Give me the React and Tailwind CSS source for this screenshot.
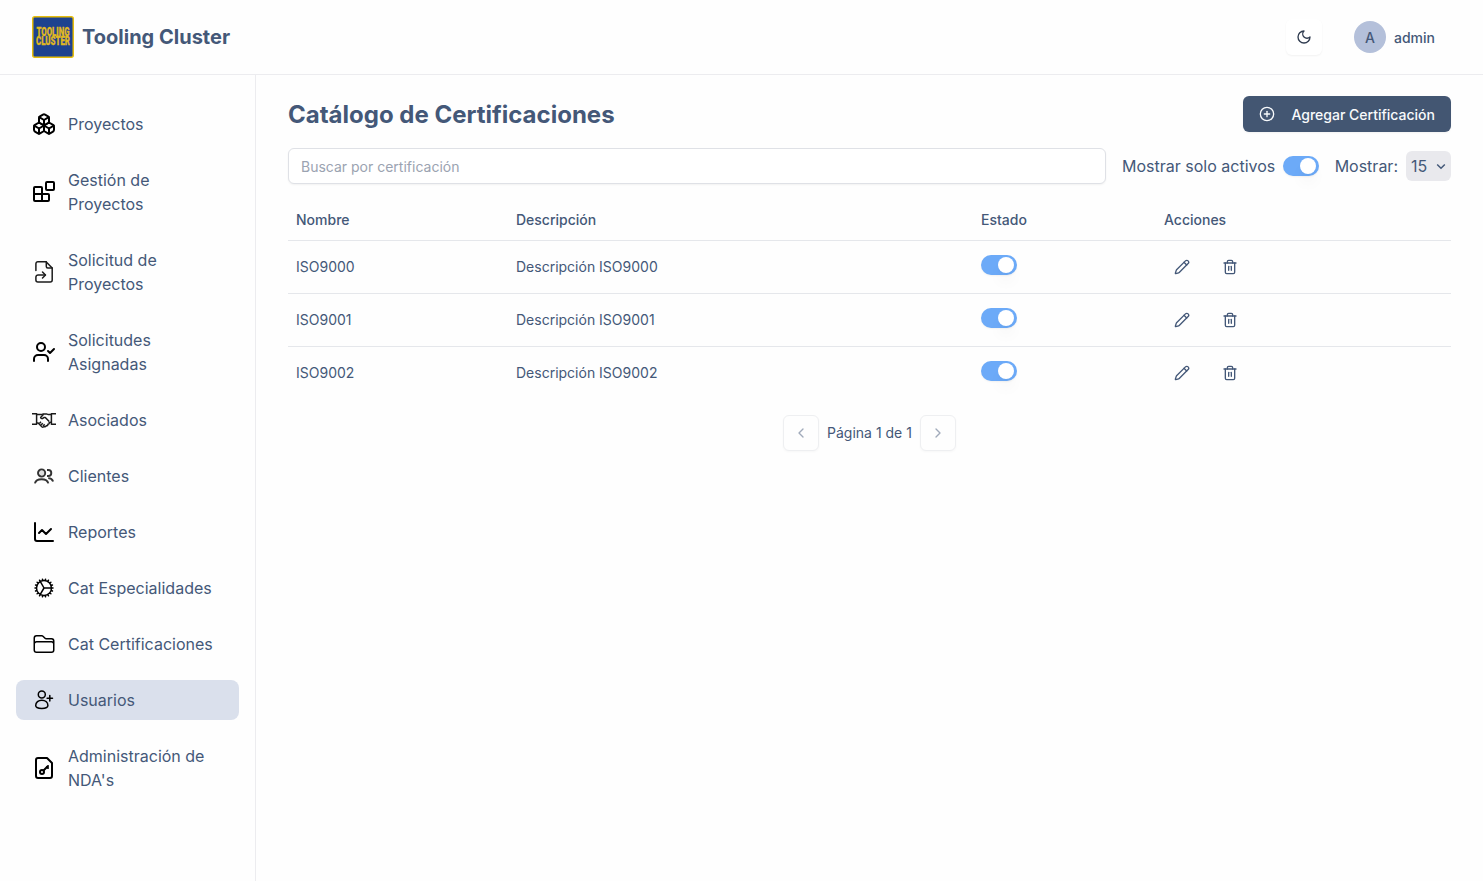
import { LuBoxes, LuUserCheck, LuChartLine, LuFileKey, LuMoon, LuPencil, LuTrash2, LuCirclePlus, LuChevronLeft, LuChevronRight } from 'react-icons/lu'
import { HiOutlineCog, HiOutlineFolder } from 'react-icons/hi2'

function BlocksIcon({ className }) {
  return (
    <svg viewBox="0 0 24 24" className={className} fill="none" stroke="currentColor" strokeWidth="2" strokeLinecap="round" strokeLinejoin="round">
      <rect width="8" height="8" x="14" y="2" rx="1" />
      <path d="M10 21V8a1 1 0 0 0-1-1H3a1 1 0 0 0-1 1v12a1 1 0 0 0 1 1h13a1 1 0 0 0 1-1v-5a1 1 0 0 0-1-1H2" />
    </svg>
  )
}

function FileArrowIcon({ className }) {
  return (
    <svg viewBox="0 0 24 24" className={className} fill="none" stroke="#1c1c1c" strokeWidth="1.5" strokeLinecap="round" strokeLinejoin="round">
      <path d="M3.900 10.500V3.800a2 2 0 0 1 2-2H14l6.200 6.200v12.100a2 2 0 0 1-2 2H5.900a2 2 0 0 1-2-2V17.200A2.200 2.200 0 0 1 6.100 15h7" />
      <path d="M14.300 1.800v4.700c0 .9.600 1.500 1.500 1.500h4.400M10.500 12l3 3-3 3" />
    </svg>
  )
}

function HandshakeIcon({ className }) {
  return (
    <svg viewBox="0 0 24 24" className={className} fill="none" stroke="#1a1a1a" strokeWidth="1.5" strokeLinejoin="round">
      <path d="M0 5.700h4.600v10.500H0M24 5.700h-4.600v10.500H24" />
      <path d="M4.600 6.600h4.600l2.200-.7h3l2 .7h3" />
      <path d="M11.600 6.200 8.600 9.400c.2 1.500 1.900 1.700 3.300.2l1.400-.2 3.900 4.200" />
      <path d="M4.600 15h1.600l3.600 3.700c.8.7 1.800.5 2.200-.2 1 .6 2 0 2.200-.8 1 .2 1.800-.5 1.700-1.400 1.200 0 1.700-1 1.300-1.900l2.200-.2" />
      <path d="m7.400 15.400 1.600-1.700M9 17.100l1.800-1.900M11 18.200l1.600-1.900" />
    </svg>
  )
}

function ClientsIcon({ className }) {
  return (
    <svg viewBox="0 0 24 24" className={className} fill="none" stroke="#333333" strokeWidth="1.9">
      <circle cx="9.600" cy="9" r="3.600" fill="#dddddd" />
      <path d="M15 6h1.300a3 3 0 0 1 0 6H15" />
      <path d="M2.900 19.400c.7-3 3.300-4.200 6.700-4.200s6 1.200 6.700 4.200" />
      <path d="M16.200 14.100c2.600.1 4.200 1.200 4.900 3.400" />
    </svg>
  )
}

function UserPlusIcon({ className }) {
  return (
    <svg viewBox="0 0 24 24" className={className} fill="none" stroke="currentColor" strokeWidth="1.5" strokeLinecap="round" strokeLinejoin="round">
      <circle cx="9.800" cy="6.400" r="3.500" />
      <path d="M3.700 17.600c0-3.300 2.700-5.400 6.100-5.400s6.100 2.100 6.100 5.400c0 1.700-2.500 2.900-6.100 2.900s-6.100-1.200-6.100-2.900ZM17.800 7.500v5.400M15.100 10.200h5.400" />
    </svg>
  )
}

const menu = [
  ['Proyectos', LuBoxes],
  ['Gestión de Proyectos', BlocksIcon],
  ['Solicitud de Proyectos', FileArrowIcon],
  ['Solicitudes Asignadas', LuUserCheck],
  ['Asociados', HandshakeIcon],
  ['Clientes', ClientsIcon],
  ['Reportes', LuChartLine],
  ['Cat Especialidades', HiOutlineCog],
  ['Cat Certificaciones', HiOutlineFolder],
  ['Usuarios', UserPlusIcon],
  ["Administración de NDA's", LuFileKey],
]

function Logo() {
  return (
    <svg viewBox="0 0 42 42" className="size-[42px]">
      <rect x="0.75" y="0.75" width="40.5" height="40.5" rx="2" fill="#1d428f" stroke="#e6bd0c" strokeWidth="1.5" />
      <g fill="#e0b91f" stroke="#e0b91f" strokeWidth="0.3" fontFamily="Roboto, sans-serif" fontWeight="900" fontSize="12">
        <text x="4.500" y="20.300" textLength="33" lengthAdjust="spacingAndGlyphs">TOOLING</text>
        <text x="4" y="29.300" textLength="34" lengthAdjust="spacingAndGlyphs">CLUSTER</text>
      </g>
    </svg>
  )
}

function Toggle() {
  return (
    <button role="switch" aria-checked="true" className="flex h-5 w-9 shrink-0 items-center justify-end rounded-full bg-[#6caaf8] pr-[3px] shadow-xs">
      <span className="size-4 rounded-full bg-white shadow-[0_10px_15px_-3px_rgb(0_0_0/0.08),0_4px_6px_-4px_rgb(0_0_0/0.08)]" />
    </button>
  )
}

function PageButton({ icon: Icon }) {
  return (
    <button className="flex size-9 items-center justify-center rounded-md border border-[#e0e2e6] bg-white opacity-50 shadow-xs">
      <Icon className="size-4" />
    </button>
  )
}

const rows = ['ISO9000', 'ISO9001', 'ISO9002']

export default function App() {
  return (
    <div className="flex h-[881px] flex-col bg-[#fefefe] font-['Inter',sans-serif] text-[#445878]">
      <header className="flex h-[75px] shrink-0 items-center justify-between border-b border-[#ececef] pr-12 pl-8">
        <div className="flex items-center gap-2">
          <Logo />
          <span className="text-xl font-bold">Tooling Cluster</span>
        </div>
        <div className="flex items-center gap-8">
          <button className="flex size-9 items-center justify-center rounded-md bg-white text-[#2f3b4f] shadow-xs">
            <LuMoon className="size-4" />
          </button>
          <div className="flex items-center gap-2 text-sm font-medium">
            <span className="flex size-8 items-center justify-center rounded-full bg-[#b4c0da] pt-px">A</span>
            <span className="pt-px">admin</span>
          </div>
        </div>
      </header>
      <div className="flex min-h-0 flex-1">
        <nav className="flex w-64 shrink-0 flex-col gap-4 border-r border-[#ececef] px-4 pt-[29px]">
          {menu.map(([label, Icon]) => (
            <a key={label} className={label === 'Usuarios' ? 'flex items-center gap-3 rounded-lg bg-[#dae0ec] px-4 py-2' : 'flex items-center gap-3 rounded-lg px-4 py-2'}>
              <Icon className="size-6 shrink-0 text-black" />
              <span>{label}</span>
            </a>
          ))}
        </nav>
        <main className="flex-1 px-8 pt-[21px]">
          <div className="flex h-9 items-center justify-between">
            <h1 className="pt-0.5 text-2xl font-bold">Catálogo de Certificaciones</h1>
            <button className="flex h-9 items-center gap-4 rounded-md bg-[#435672] px-4 text-sm font-medium text-[#f8fafc] shadow-xs">
              <LuCirclePlus className="size-4" />
              <span className="pt-0.5">Agregar Certificación</span>
            </button>
          </div>
          <div className="mt-4 flex items-center gap-4">
            <input placeholder="Buscar por certificación" className="h-9 w-[818px] min-w-0 shrink-0 rounded-md border border-[#dfe1e6] bg-white px-3 text-sm shadow-xs placeholder:text-[#9ba3b1]" />
            <div className="flex flex-1 items-center justify-between">
              <span className="whitespace-nowrap">Mostrar solo activos</span>
              <Toggle />
            </div>
            <div className="flex items-center gap-2">
              <span>Mostrar:</span>
              <button className="flex h-[30px] w-[45px] items-center justify-between rounded-md bg-[#e9e9ed] pr-[5px] pl-[5px]">
                15
                <svg viewBox="0 0 10 10" className="size-2.5" fill="none" stroke="currentColor" strokeWidth="1.5">
                  <path d="m1.200 3.500 3.800 3.800 3.800-3.800" />
                </svg>
              </button>
            </div>
          </div>
          <table className="mt-4 w-full table-fixed text-left text-sm">
            <colgroup>
              <col className="w-[220px]" />
              <col className="w-[465px]" />
              <col className="w-[183px]" />
              <col />
            </colgroup>
            <thead>
              <tr className="h-10 border-b border-[#e5e7eb]">
                <th className="px-2 font-medium">Nombre</th>
                <th className="px-2 font-medium">Descripción</th>
                <th className="px-2 font-medium">Estado</th>
                <th className="px-2 font-medium">Acciones</th>
              </tr>
            </thead>
            <tbody>
              {rows.map((name) => (
                <tr key={name} className="h-[53px] border-b border-[#e5e7eb] last:border-b-0">
                  <td className="px-2">{name}</td>
                  <td className="px-2">Descripción {name}</td>
                  <td className="px-2 pb-1">
                    <Toggle />
                  </td>
                  <td className="px-2">
                    <div className="flex gap-3">
                      <button className="flex size-9 items-center justify-center"><LuPencil className="size-4" /></button>
                      <button className="flex size-9 items-center justify-center"><LuTrash2 className="size-4" /></button>
                    </div>
                  </td>
                </tr>
              ))}
            </tbody>
          </table>
          <div className="mt-4 flex items-center justify-center gap-2 text-sm">
            <PageButton icon={LuChevronLeft} />
            <span>Página 1 de 1</span>
            <PageButton icon={LuChevronRight} />
          </div>
        </main>
      </div>
    </div>
  )
}
